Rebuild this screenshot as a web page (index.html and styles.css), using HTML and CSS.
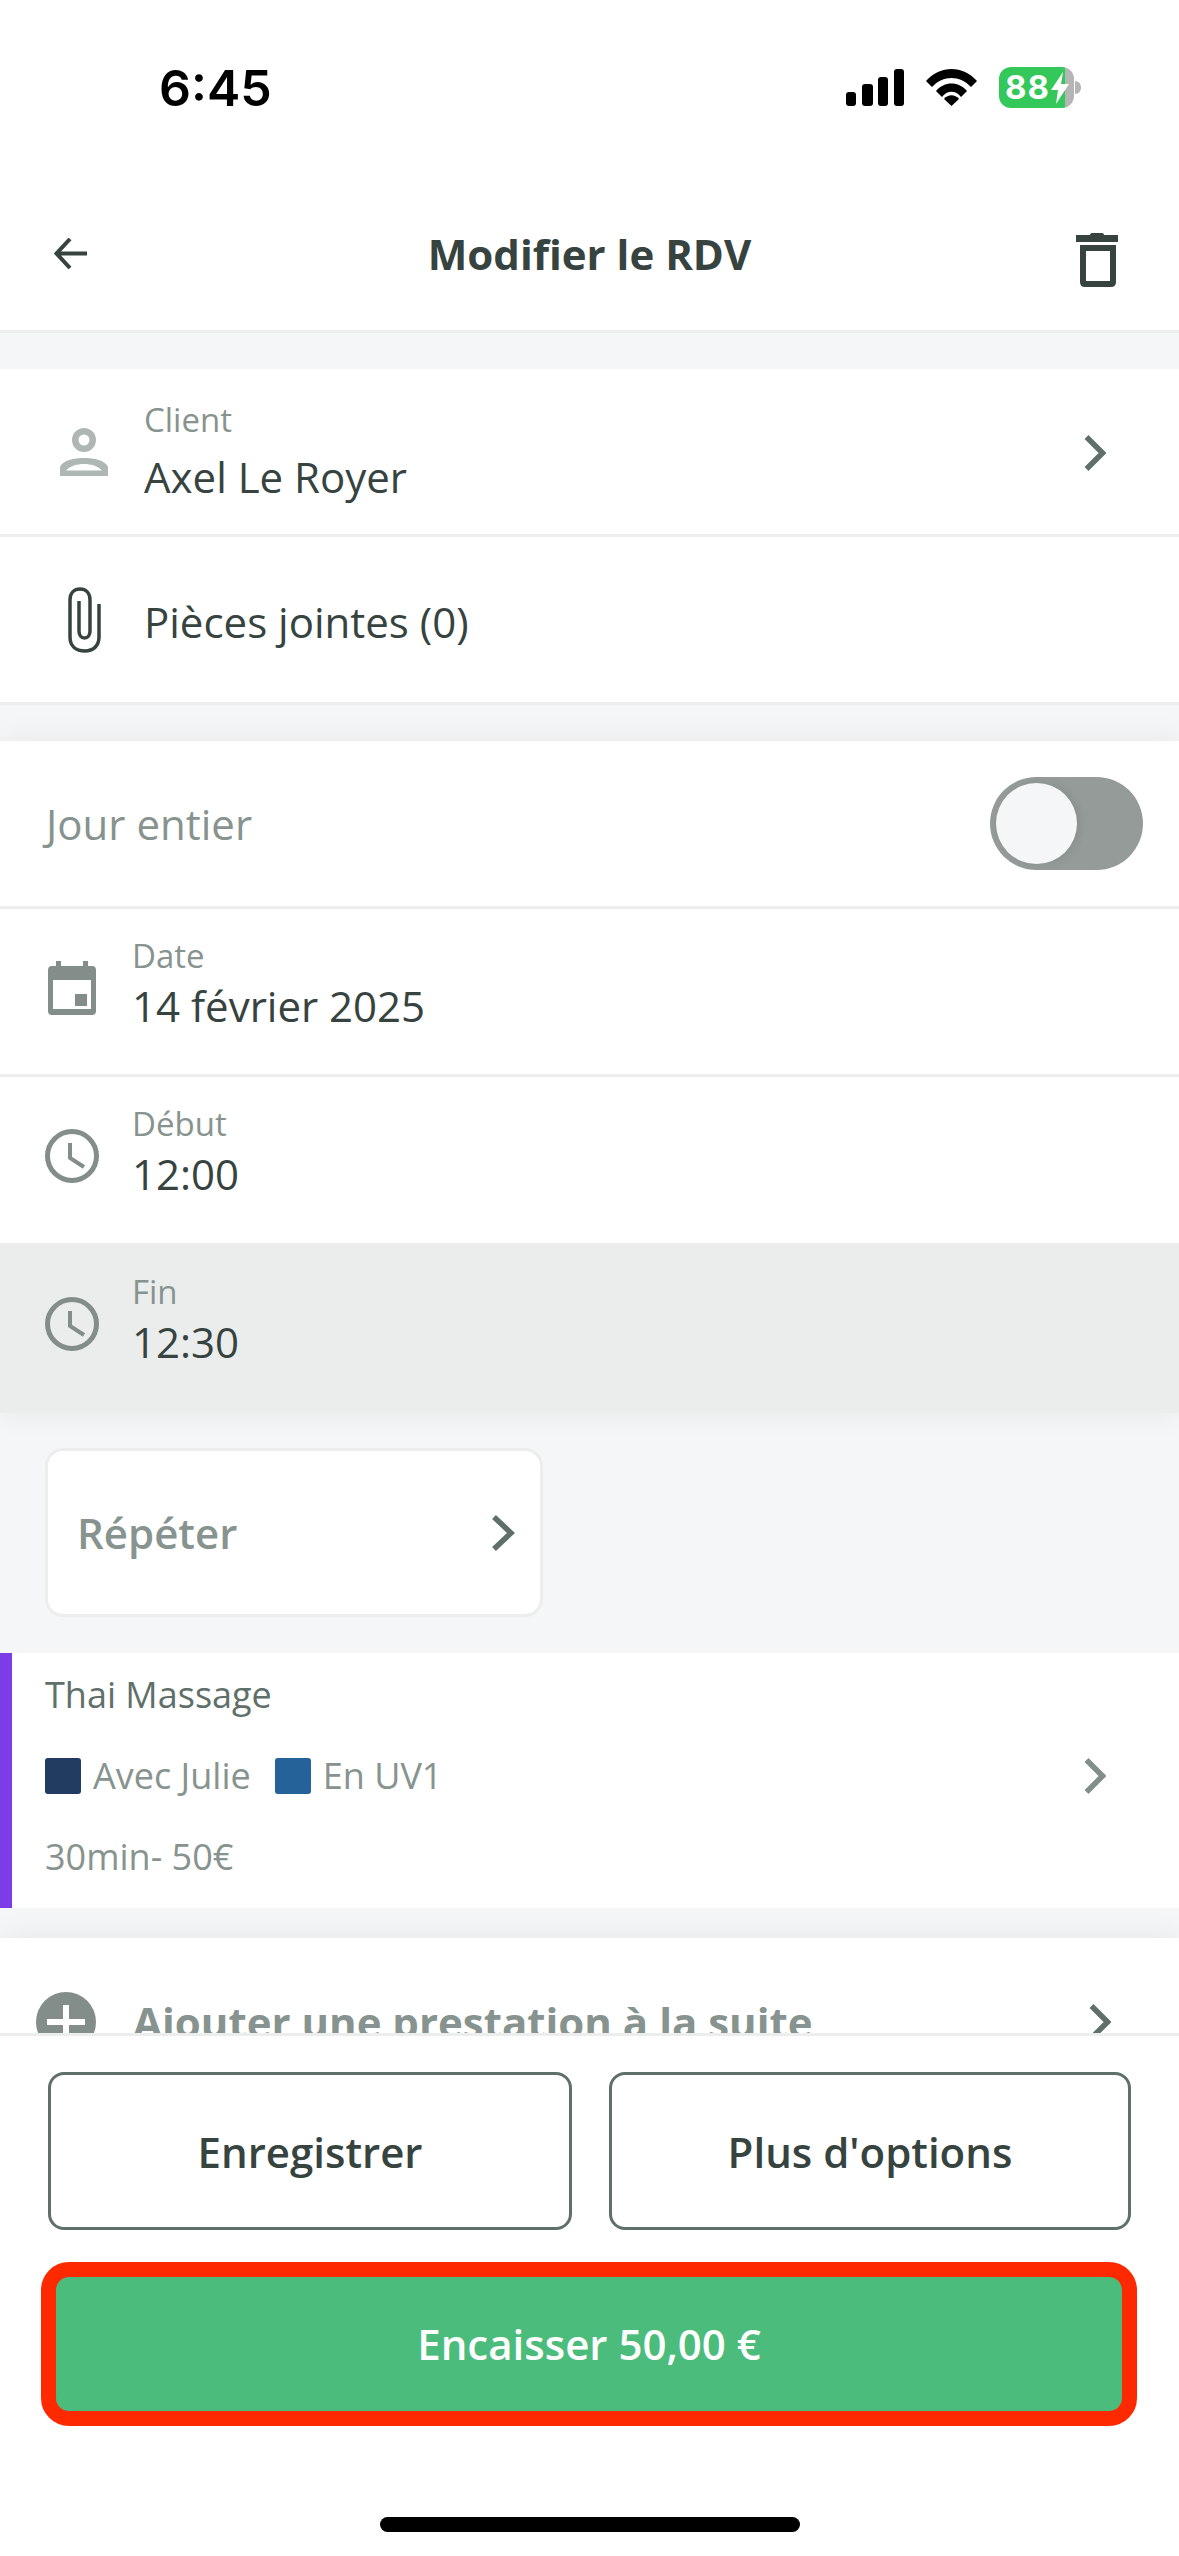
FILE: index.html
```html
<!DOCTYPE html>
<html lang="fr">
<head>
    <meta charset="UTF-8">
    <meta name="viewport" content="width=device-width, initial-scale=1.0">
    <title>Modifier le RDV</title>
    <link rel="stylesheet" href="styles.css">
</head>
<body>
    <div class="page">
        <div class="status-bar">
            <span class="clock-time">6:45</span>
            <div class="status-icons">
                <svg class="signal" width="58" height="37" viewBox="0 0 58 37">
                    <rect x="0" y="23" width="10" height="14" rx="3"/>
                    <rect x="16" y="15" width="11" height="22" rx="3"/>
                    <rect x="32" y="8" width="10" height="29" rx="3"/>
                    <rect x="48" y="0" width="10" height="37" rx="3"/>
                </svg>
                <svg class="wifi" width="51" height="37" viewBox="0 0 51 37">
                    <path d="M0 12 C14 -4 37 -4 51 12 L45 18 C34 6 17 6 6 18 Z"/>
                    <path d="M10 22 C18 12 33 12 41 22 L35 28 C30 21 21 21 16 28 Z"/>
                    <path d="M18 30 C22 25 29 25 33 30 L25.500 37 Z"/>
                </svg>
                <div class="battery">
                    <div class="battery-body">
                        <span class="battery-level">88</span>
                        <svg class="bolt" width="18" height="32" viewBox="0 0 18 32">
                            <path d="M12 0 L0 18 H7 L5 32 L18 12 H10 Z"/>
                        </svg>
                    </div>
                    <span class="battery-tip"></span>
                </div>
            </div>
        </div>

        <div class="nav">
            <svg width="33" height="31" viewBox="0 0 33 31" fill="none" stroke="#36433f" stroke-width="4">
                <path d="M33 15.500 H3 M16 1 L2.500 15.500 L16 30"/>
            </svg>
            <h1 class="nav-title">Modifier le RDV</h1>
            <svg class="nav-trash" width="42" height="54" viewBox="0 0 42 54" fill="#36433f">
                <path d="M14 2 Q14 0 16 0 H26 Q28 0 28 2 H42 V9 H0 V2 Z"/>
                <path fill-rule="evenodd" d="M4 12 H40 V49 Q40 54 35 54 H9 Q4 54 4 49 Z M10 18 V48 H34 V18 Z"/>
            </svg>
        </div>

        <div class="content">
            <section class="group">
                <div class="row row-client">
                    <svg class="row-icon" width="48" height="48" viewBox="0 0 48 48" fill="#aeb7b3">
                        <path fill-rule="evenodd" d="M24 0 A12 12 0 1 1 24 24 A12 12 0 1 1 24 0 Z M24 6.500 A5.500 5.500 0 1 0 24 17.500 A5.500 5.500 0 1 0 24 6.500 Z"/>
                        <path fill-rule="evenodd" d="M0 48 V39 C3 32 14 30 24 30 C34 30 45 32 48 39 V48 Z M6 42.500 H42 C38 38 31 36 24 36 C17 36 10 38 6 42.500 Z"/>
                    </svg>
                    <div class="row-text">
                        <span class="row-label">Client</span>
                        <span class="row-value">Axel Le Royer</span>
                    </div>
                    <svg class="chevron" width="22" height="36" viewBox="0 0 22 36" fill="none" stroke="#5f6f69" stroke-width="5.500">
                        <path d="M2.500 2 L18.500 18 L2.500 34"/>
                    </svg>
                </div>
                <div class="row row-client">
                    <svg class="row-icon clip-icon" width="33" height="66" viewBox="0 0 33 66" fill="none" stroke="#36433f" stroke-width="3.500">
                        <path d="M31 17 V50 C31 59 25 64 17 64 C8 64 2 59 2 50 V13 C2 6 6 2 12 2 C18 2 22 6 22 13 V44 C22 48 20 51 16.500 51 C13 51 11 48 11 44 V14"/>
                    </svg>
                    <div class="row-text row-text-single">
                        <span class="row-value">Pièces jointes (0)</span>
                    </div>
                </div>
            </section>

            <section class="group group-raised">
                <div class="row">
                    <span class="row-plain">Jour entier</span>
                    <div class="toggle"><span class="toggle-knob"></span></div>
                </div>
                <div class="row row-time">
                    <svg class="row-icon calendar-icon" width="48" height="54" viewBox="0 0 48 54" fill="#838d89">
                        <path fill-rule="evenodd" d="M8 0 H13 V5 H35 V0 H40 V5 H44 Q48 5 48 9 V50 Q48 54 44 54 H4 Q0 54 0 50 V9 Q0 5 4 5 H8 Z M5 19 V48 H43 V19 Z"/>
                        <rect x="27" y="33" width="12" height="12"/>
                    </svg>
                    <div class="row-text">
                        <span class="row-label">Date</span>
                        <span class="row-value">14 février 2025</span>
                    </div>
                </div>
                <div class="row row-time row-flat">
                    <svg class="row-icon" width="54" height="54" viewBox="0 0 54 54" fill="none" stroke="#838d89" stroke-width="5">
                        <circle cx="27" cy="27" r="24.500"/>
                        <path stroke-width="4" d="M25 14 V29 L39 38"/>
                    </svg>
                    <div class="row-text">
                        <span class="row-label">Début</span>
                        <span class="row-value">12:00</span>
                    </div>
                </div>
                <div class="row row-time row-flat row-active">
                    <svg class="row-icon" width="54" height="54" viewBox="0 0 54 54" fill="none" stroke="#838d89" stroke-width="5">
                        <circle cx="27" cy="27" r="24.500"/>
                        <path stroke-width="4" d="M25 14 V29 L39 38"/>
                    </svg>
                    <div class="row-text">
                        <span class="row-label">Fin</span>
                        <span class="row-value">12:30</span>
                    </div>
                </div>
            </section>

            <div class="repeat-wrap">
                <div class="repeat-card">
                    <span class="repeat-text">Répéter</span>
                    <svg width="24" height="36" viewBox="0 0 24 36" fill="none" stroke="#5f6f69" stroke-width="5.500">
                        <path d="M3 2 L20 18 L3 34"/>
                    </svg>
                </div>
            </div>

            <section class="service">
                <div class="service-text">
                    <span class="service-name">Thai Massage</span>
                    <div class="service-meta">
                        <span class="swatch swatch-staff"></span>
                        <span>Avec Julie</span>
                        <span class="swatch swatch-room"></span>
                        <span>En UV1</span>
                    </div>
                    <span class="service-price">30min- 50€</span>
                </div>
                <svg width="22" height="36" viewBox="0 0 22 36" fill="none" stroke="#838d89" stroke-width="5.500">
                    <path d="M2.500 2 L18.500 18 L2.500 34"/>
                </svg>
            </section>

            <section class="add-row">
                <svg width="60" height="60" viewBox="0 0 60 60">
                    <circle cx="30" cy="30" r="30" fill="#838d89"/>
                    <path d="M30 13 V47 M11 30 H49" stroke="#fff" stroke-width="6"/>
                </svg>
                <span class="add-text">Ajouter une prestation à la suite</span>
                <svg class="add-chevron" width="22" height="36" viewBox="0 0 22 36" fill="none" stroke="#5f6f69" stroke-width="5.500">
                    <path d="M2.500 2 L18.500 18 L2.500 34"/>
                </svg>
            </section>
        </div>

        <div class="footer">
            <div class="footer-buttons">
                <button class="btn-outline" type="button">Enregistrer</button>
                <button class="btn-outline" type="button">Plus d'options</button>
            </div>
            <button class="btn-pay" type="button">Encaisser 50,00 €</button>
            <div class="home-bar"></div>
        </div>
    </div>
</body>
</html>
```

FILE: styles.css
```css
* {
    box-sizing: border-box;
}
body {
    margin: 0;
    background: #fff;
    font-family: "Open Sans", "Noto Sans", sans-serif;
    color: #36433f;
}
.page {
    width: 1179px;
    height: 2556px;
    display: flex;
    flex-direction: column;
    overflow: hidden;
}

/* status bar */
.status-bar {
    height: 180px;
    flex-shrink: 0;
    display: flex;
    justify-content: space-between;
    align-items: flex-start;
    padding: 56px 98px 0 159px;
}
.clock-time {
    font-family: Inter, sans-serif;
    font-size: 50px;
    line-height: 64px;
    font-weight: 600;
    color: #000;
}
.status-icons {
    display: flex;
    align-items: center;
    padding-top: 11px;
}
.signal {
    margin-right: 22px;
}
.wifi {
    margin-right: 22px;
}
.battery {
    display: flex;
    align-items: center;
}
.battery-body {
    width: 75px;
    height: 41px;
    border-radius: 12px;
    background: linear-gradient(to right, #34c759 66px, #b5b5b5 66px);
    display: flex;
    align-items: center;
    padding-left: 6px;
    color: #fff;
}
.battery-level {
    font-family: Inter, sans-serif;
    font-size: 33px;
    line-height: 41px;
    font-weight: 700;
    letter-spacing: 1px;
}
.bolt {
    fill: #fff;
    margin-left: 1px;
}
.battery-tip {
    width: 6px;
    height: 13px;
    margin-left: 1px;
    border-radius: 0 7px 7px 0;
    background: #b5b5b5;
}

/* top nav */
.nav {
    height: 153px;
    flex-shrink: 0;
    display: flex;
    justify-content: space-between;
    align-items: center;
    padding: 0 61px 3px 54px;
    border-bottom: 3px solid #eceeee;
}
.nav-title {
    margin: 0 0 0 16px;
    font-size: 42px;
    font-weight: 700;
}
.nav-trash {
    margin-top: 12px;
}

/* scrolling part */
.content {
    flex: 1;
    min-height: 0;
    overflow: hidden;
    background: #f5f6f8;
    padding-top: 36px;
}
.group {
    background: #fff;
}
.group-raised {
    position: relative;
    margin-top: 36px;
    box-shadow: 0 0 30px rgba(0, 0, 0, 0.07);
}
.row {
    height: 168px;
    display: flex;
    align-items: center;
    padding: 0 45px;
    border-bottom: 3px solid #eceeee;
}
.row-flat {
    height: 166px;
    border-bottom: 0;
}
.row-active {
    height: 170px;
    background: #ebeded;
}
.row-client {
    padding: 0 73px 0 60px;
}
.row-time {
    padding-bottom: 8px;
}
.row-icon {
    flex-shrink: 0;
}
.calendar-icon {
    margin: 0 3px;
}
.clip-icon {
    margin: 0 7px 0 8px;
}
.row-text {
    flex: 1;
    display: flex;
    flex-direction: column;
    margin-left: 33px;
}
.row-time .row-text {
    margin-bottom: 8px;
}
.row-time .row-value {
    margin-top: -2px;
}
.row-client .row-text {
    margin-left: 36px;
}
.row-client .row-text-single {
    padding-top: 4px;
}
.row-label {
    font-size: 33px;
    line-height: 46px;
    color: #87938e;
}
.row-value {
    font-size: 42px;
    line-height: 58px;
}
.row-client .row-label {
    line-height: 50px;
}
.row-client .row-value {
    line-height: 64px;
}
.chevron {
    margin-top: 3px;
}
.row-plain {
    flex: 1;
    margin-left: 1px;
    font-size: 42px;
    color: #87938e;
}
.toggle {
    width: 153px;
    height: 93px;
    margin-right: -9px;
    padding: 6px;
    border-radius: 47px;
    background: #949b98;
}
.toggle-knob {
    display: block;
    width: 81px;
    height: 81px;
    border-radius: 50%;
    background: #f5f6f8;
    box-shadow: 3px 0 8px rgba(0, 0, 0, 0.08);
}

/* repeat */
.repeat-wrap {
    padding: 35px 45px 36px 45px;
}
.repeat-card {
    width: 498px;
    height: 169px;
    display: flex;
    justify-content: space-between;
    align-items: center;
    padding: 0 25px 0 29px;
    background: #fff;
    border: 3px solid #eceeee;
    border-radius: 18px;
}
.repeat-text {
    font-size: 42px;
    font-weight: 600;
    color: #87938e;
}

/* service */
.service {
    height: 255px;
    display: flex;
    justify-content: space-between;
    align-items: center;
    padding: 0 73px 10px 33px;
    background: #fff;
    border-left: 12px solid #7c3de8;
}
.service-text {
    display: flex;
    flex-direction: column;
    gap: 32px;
}
.service-name {
    font-size: 36px;
    line-height: 49px;
    color: #5f6f69;
}
.service-meta {
    display: flex;
    align-items: center;
    font-size: 36px;
    line-height: 49px;
    color: #87938e;
}
.swatch {
    width: 36px;
    height: 36px;
    border-radius: 3px;
    margin-right: 12px;
}
.swatch-staff {
    background: #213c60;
}
.swatch-room {
    margin-left: 24px;
    background: #25629a;
}
.service-price {
    font-size: 36px;
    line-height: 49px;
    color: #87938e;
}

/* add row, cut by the footer */
.add-row {
    position: relative;
    margin-top: 30px;
    height: 170px;
    display: flex;
    align-items: flex-start;
    padding: 54px 68px 0 36px;
    background: #fff;
    box-shadow: 0 0 30px rgba(0, 0, 0, 0.07);
}
.add-text {
    flex: 1;
    margin: 0 0 0 37px;
    font-size: 42px;
    line-height: 60px;
    font-weight: 700;
    color: #87938e;
}
.add-chevron {
    margin-top: 12px;
}

/* footer */
.footer {
    position: relative;
    height: 523px;
    flex-shrink: 0;
    padding: 36px 48px 0;
    background: #fff;
    border-top: 3px solid #eceeee;
}
.footer-buttons {
    display: grid;
    grid-template-columns: 524px 522px;
    gap: 37px;
}
.btn-outline {
    height: 158px;
    font-family: inherit;
    font-size: 42px;
    font-weight: 600;
    color: #36433f;
    background: #fff;
    border: 3px solid #5f6f69;
    border-radius: 16px;
}
.btn-pay {
    display: block;
    width: 1096px;
    height: 164px;
    margin: 32px 0 0 -7px;
    padding-bottom: 3px;
    font-family: inherit;
    font-size: 42px;
    font-weight: 600;
    color: #fff;
    background: #4bbc7c;
    border: 15px solid #ff2900;
    border-radius: 28px;
}
.home-bar {
    width: 420px;
    height: 15px;
    margin: 91px auto 0;
    border-radius: 8px;
    background: #000;
}
```
